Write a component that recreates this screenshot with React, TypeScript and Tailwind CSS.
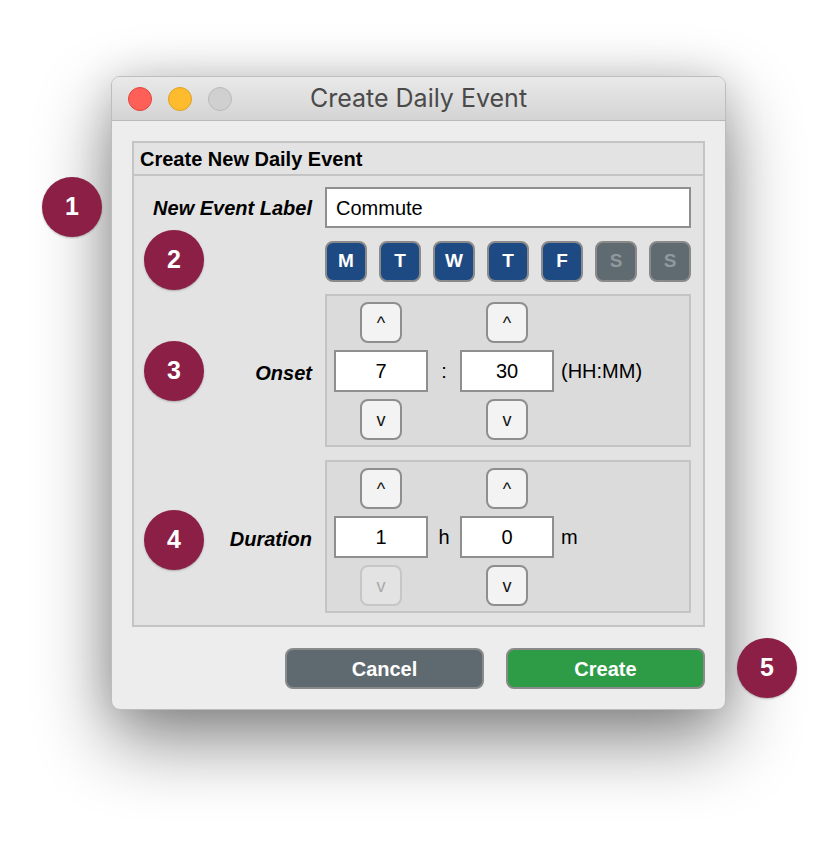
import React from "react";

const sans = "font-['Liberation_Sans',Arial,sans-serif]";

function Badge({ n, className }: { n: string; className: string }) {
  return (
    <div
      className={`absolute w-[60px] h-[60px] rounded-full bg-[#8c1f45] flex items-center justify-center text-white font-bold text-[25px] shadow-[0_1px_2px_rgba(0,0,0,0.25)] ${className}`}
    >
      {n}
    </div>
  );
}

function StepBtn({ label, disabled }: { label: string; disabled?: boolean }) {
  return (
    <div
      className={`w-[42px] h-[41px] rounded-[8px] border-2 flex items-center justify-center text-[18px] leading-none ${
        disabled
          ? "bg-[#e3e3e3] border-[#c6c6c6] text-[#a9a9a9]"
          : "bg-[#f3f3f3] border-[#8e8e8e] text-[#111]"
      }`}
    >
      {label}
    </div>
  );
}

function NumBox({ value }: { value: string }) {
  return (
    <div className="w-[94px] h-[42px] bg-white border-2 border-[#8f8f8f] flex items-center justify-center text-[20px] text-black">
      {value}
    </div>
  );
}

function Spinner({
  a,
  b,
  sep,
  unit,
  downADisabled,
  className = "",
}: {
  a: string;
  b: string;
  sep: string;
  unit: string;
  downADisabled?: boolean;
  className?: string;
}) {
  return (
    <div className={`h-[153px] border-2 border-[#c4c4c4] bg-[#dbdbdb] pt-[6px] pl-[7px] ${className}`}>
      <div className="grid grid-cols-[94px_32px_94px_auto] grid-rows-[41px_42px_41px] gap-y-[7px] items-center">
        <div className="flex justify-center">
          <StepBtn label="^" />
        </div>
        <div />
        <div className="flex justify-center">
          <StepBtn label="^" />
        </div>
        <div />
        <NumBox value={a} />
        <div className="text-center text-[20px] text-black">{sep}</div>
        <NumBox value={b} />
        <div className="pl-[7px] text-[20px] text-black">{unit}</div>
        <div className="flex justify-center">
          <StepBtn label="v" disabled={downADisabled} />
        </div>
        <div />
        <div className="flex justify-center">
          <StepBtn label="v" />
        </div>
        <div />
      </div>
    </div>
  );
}

function Light({ bg, border }: { bg: string; border: string }) {
  return <div className={`w-[24px] h-[24px] rounded-full border ${bg} ${border}`} />;
}

export default function App() {
  const days: { d: string; on: boolean }[] = [
    { d: "M", on: true },
    { d: "T", on: true },
    { d: "W", on: true },
    { d: "T", on: true },
    { d: "F", on: true },
    { d: "S", on: false },
    { d: "S", on: false },
  ];
  return (
    <div className={`relative w-[838px] h-[858px] bg-white overflow-hidden pt-[76px] pl-[111px] ${sans}`}>
      <div className="w-[615px] h-[634px] rounded-[9px] border border-[#bdbdbd] bg-[#ededed] overflow-hidden shadow-[0_30px_75px_rgba(0,0,0,0.48),0_0_40px_rgba(0,0,0,0.12)] flex flex-col">
        {/* title bar */}
        <div className="h-[44px] shrink-0 border-b border-[#b9b9b9] bg-gradient-to-b from-[#e9e9e9] to-[#d4d4d4] grid grid-cols-[1fr_auto_1fr] items-center px-[16px]">
          <div className="flex gap-[16px]">
            <Light bg="bg-[#fe5f57]" border="border-[#e0443e]" />
            <Light bg="bg-[#febb2e]" border="border-[#dea123]" />
            <Light bg="bg-[#d0d0d0]" border="border-[#b9b9b9]" />
          </div>
          <div className="font-['Inter',sans-serif] text-[25px] text-[#4a4a4a] leading-none">
            Create Daily Event
          </div>
          <div />
        </div>

        {/* content */}
        <div className="flex-1 pt-[20px] px-[20px] pb-[20px] flex flex-col">
          <div className="border-2 border-[#c4c4c4] bg-[#e3e3e3] flex flex-col">
            <div className="h-[33px] border-b-2 border-[#c4c4c4] flex items-center pl-[6px] text-[20px] font-bold text-black">
              Create New Daily Event
            </div>
            <div className="grid grid-cols-[178px_366px] gap-x-[13px] gap-y-[12px] pt-[11px] pb-[12px] items-center">
              <div className="text-right text-[20px] font-bold italic text-black pt-[1px]">New Event Label</div>
              <div className="h-[41px] bg-white border-2 border-[#8f8f8f] flex items-center pl-[9px] pt-[1px] text-[20px] text-black">
                Commute
              </div>

              <div />
              <div className="flex gap-[12px] mt-[1px]">
                {days.map((x, i) => (
                  <div
                    key={i}
                    className={`w-[42px] h-[41px] rounded-[8px] border-2 border-[#8a8a8a] flex items-center justify-center text-[19px] font-bold ${
                      x.on ? "bg-[#1e4a84] text-white" : "bg-[#5f6a71] text-[#8f989d]"
                    }`}
                  >
                    {x.d}
                  </div>
                ))}
              </div>

              <div className="text-right text-[20px] font-bold italic text-black pt-[4px]">Onset</div>
              <Spinner a="7" b="30" sep=":" unit="(HH:MM)" />

              <div className="text-right text-[20px] font-bold italic text-black pt-[6px]">Duration</div>
              <Spinner a="1" b="0" sep="h" unit="m" downADisabled className="mt-[1px]" />
            </div>
          </div>

          <div className="mt-[21px] flex justify-end gap-[22px]">
            <div className="w-[199px] h-[41px] rounded-[8px] border-2 border-[#8a8a8a] bg-[#5f6a70] flex items-center justify-center text-white font-bold text-[20px]">
              Cancel
            </div>
            <div className="w-[199px] h-[41px] rounded-[8px] border-2 border-[#8a8a8a] bg-[#2e9c46] flex items-center justify-center text-white font-bold text-[20px]">
              Create
            </div>
          </div>
        </div>
      </div>

      <Badge n="1" className="left-[42px] top-[177px]" />
      <Badge n="2" className="left-[144px] top-[230px]" />
      <Badge n="3" className="left-[144px] top-[341px]" />
      <Badge n="4" className="left-[144px] top-[510px]" />
      <Badge n="5" className="left-[737px] top-[638px]" />
    </div>
  );
}
